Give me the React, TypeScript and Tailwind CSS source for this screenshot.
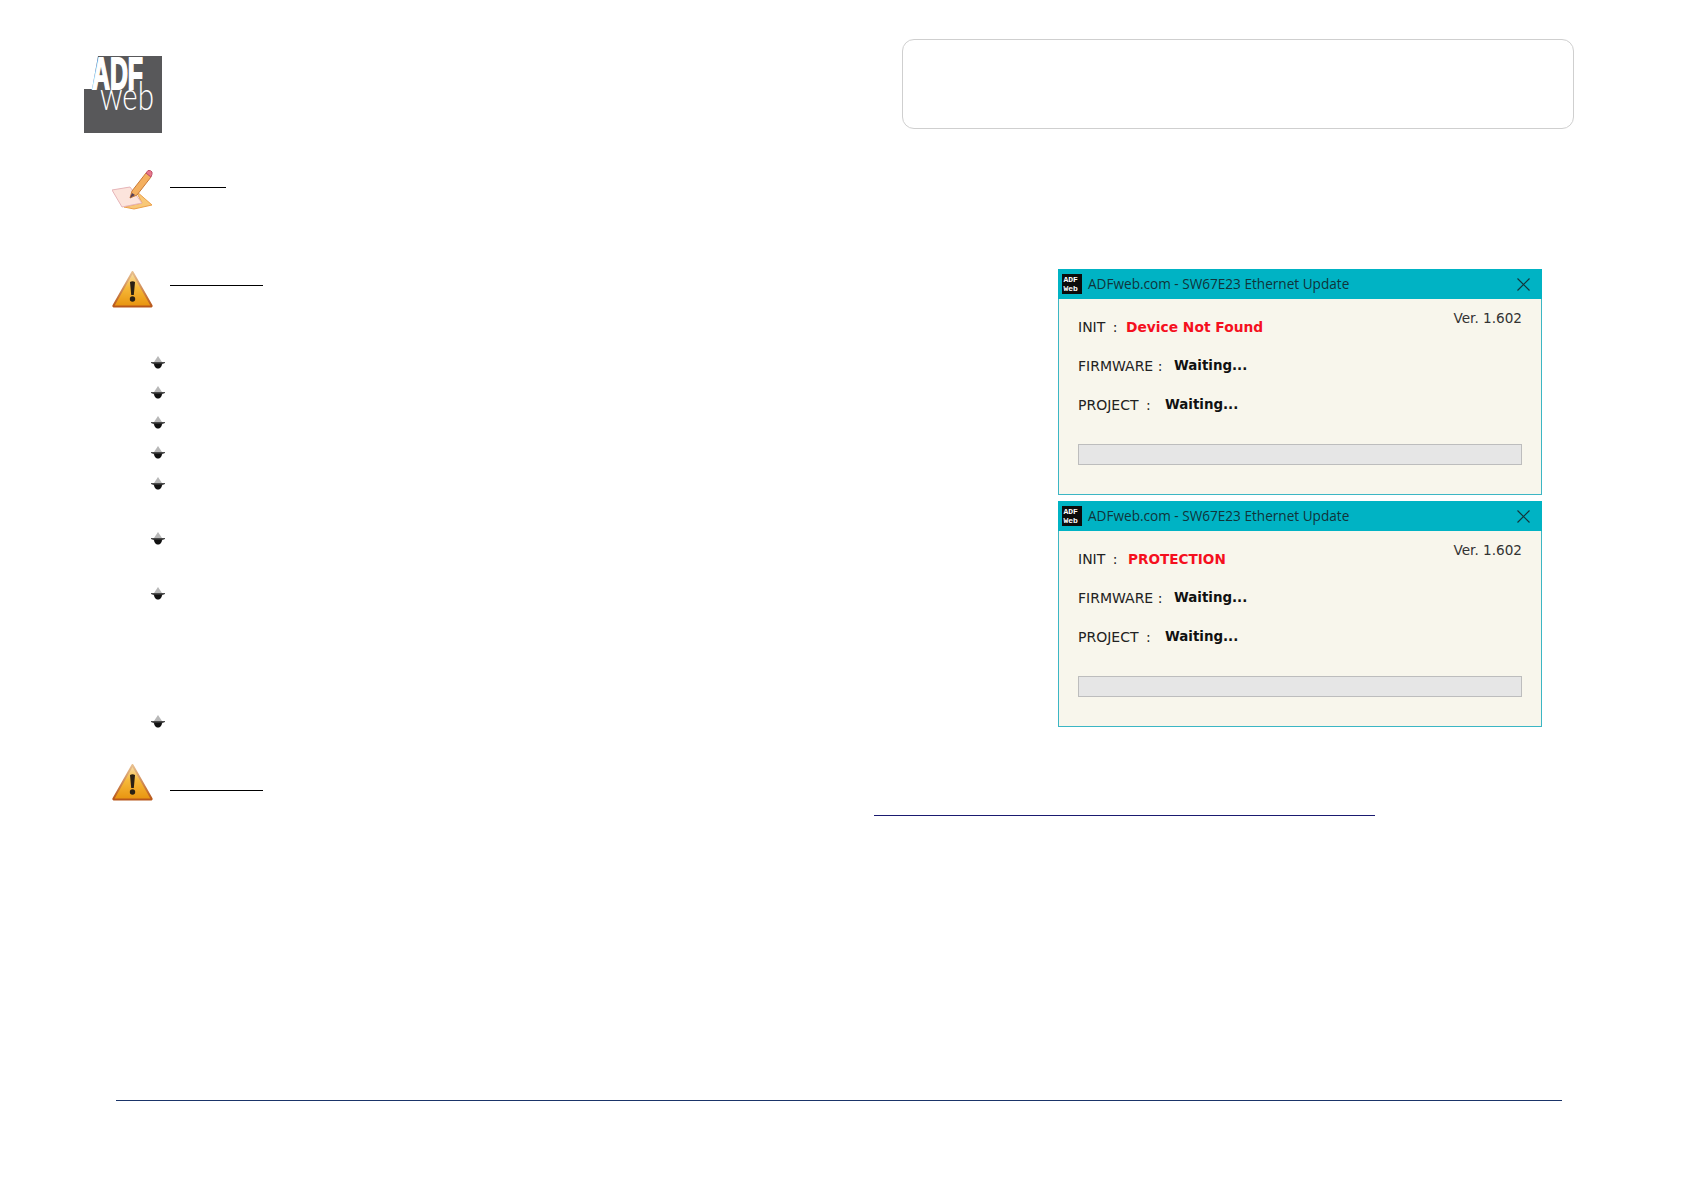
const bullets = [
  "h-[30px]",
  "h-[30px]",
  "h-[30px]",
  "h-[31px]",
  "h-[55px]",
  "h-[55px]",
  "h-[128px]",
  "h-[50px]",
];

function Logo() {
  return (
    <svg width="78" height="77" viewBox="0 0 78 77" className="mt-[17px] shrink-0 overflow-visible">
      <rect width="78" height="77" fill="#58585a" />
      <path d="M0 0 H14 L8 33 H0 Z" fill="#fff" />
      <text
        x="8"
        y="33"
        fill="#fff"
        stroke="#fff"
        strokeWidth="2"
        fontFamily="'Liberation Sans', sans-serif"
        fontWeight="700"
        fontSize="44"
        textLength="51"
        lengthAdjust="spacingAndGlyphs"
      >
        ADF
      </text>
      <text
        x="16"
        y="54"
        fill="#fff"
        fontFamily="'Lato', sans-serif"
        fontWeight="300"
        fontSize="40"
        textLength="54"
        lengthAdjust="spacingAndGlyphs"
      >
        web
      </text>
    </svg>
  );
}

function NoteIcon() {
  return (
    <svg width="41" height="40" viewBox="0 0 41 40" className="shrink-0 blur-[0.4px]">
      <path d="M24 21 L40 35 L22 39 L12 37 L30 33 Z" fill="#f8c878" stroke="#ec9f48" strokeWidth="1" />
      <path d="M0 20 L18 17 L30 33 L10 37 Z" fill="#fce4dc" stroke="#e6b4b8" strokeWidth="1" />
      <path d="M18 28 L20 21 L34 3 L39 7 L25 25 Z" fill="#f4b060" stroke="#c87a3a" strokeWidth="1" />
      <path d="M18 28 L20 23 L23 25 Z" fill="#55405a" />
      <path d="M34 3 L36 0.5 Q39 0 40 2 Q40.5 4 39 7 Z" fill="#e8788c" stroke="#c0506a" strokeWidth="1" />
    </svg>
  );
}

function WarningIcon({ id }: { id: string }) {
  return (
    <svg width="41" height="38" viewBox="0 0 41 38" className="shrink-0 blur-[0.4px]">
      <defs>
        <linearGradient id={id} x1="0" y1="0" x2="0" y2="1">
          <stop offset="0" stopColor="#f8e0b0" />
          <stop offset="0.45" stopColor="#f6b93a" />
          <stop offset="1" stopColor="#e8930e" />
        </linearGradient>
        <linearGradient id={`${id}-edge`} x1="0" y1="0" x2="0" y2="1">
          <stop offset="0" stopColor="#e8c090" />
          <stop offset="1" stopColor="#b8571a" />
        </linearGradient>
      </defs>
      <path
        d="M20.5 2 L39.5 35.5 Q40 36.5 38.5 36.5 L2.5 36.5 Q1 36.5 1.5 35.5 Z"
        fill={`url(#${id})`}
        stroke={`url(#${id}-edge)`}
        strokeWidth="2"
        strokeLinejoin="round"
      />
      <path d="M18 12 Q20.5 10.5 23 12 L21.8 25 L19.2 25 Z" fill="#2a2014" />
      <circle cx="20.5" cy="29" r="2.7" fill="#2a2014" />
    </svg>
  );
}

function Bullet() {
  return (
    <svg width="14" height="13" viewBox="0 0 14 13" className="ml-[39px] block">
      <path d="M7 0 L11 6 L3 6 Z" fill="#b8b8b8" />
      <path d="M0 6 H14 V7 L10.5 8.5 H3.5 L0 7 Z" fill="#4a4a4a" />
      <path d="M3 7.5 H11 Q11 11 8 12.5 H6 Q3 11 3 7.5 Z" fill="#111" />
    </svg>
  );
}

function StatusRow({
  label,
  labelClass,
  value,
  valueClass,
}: {
  label: string;
  labelClass: string;
  value: string;
  valueClass: string;
}) {
  return (
    <div className="flex h-[16px] items-center leading-[16px]">
      <span className={`shrink-0 whitespace-nowrap ${labelClass}`}>{label}</span>
      <span className={`font-bold ${valueClass}`}>{value}</span>
    </div>
  );
}

function UpdateWindow({
  status,
  statusClass,
  initClass,
}: {
  status: string;
  statusClass: string;
  initClass: string;
}) {
  return (
    <div className="flex h-[226px] w-[484px] flex-col border border-[#3cb6c4] bg-[#f8f6ec] font-['DejaVu_Sans',sans-serif] text-[14px] text-[#222]">
      <div className="-mx-px -mt-px flex h-[30px] shrink-0 items-center bg-[#00b3c4] pl-[4px] pr-[12px]">
        <svg width="20" height="20" viewBox="0 0 20 20" className="shrink-0">
          <rect width="20" height="20" fill="#0b0b0b" />
          <text x="1.5" y="8" fill="#fff" fontSize="8" fontWeight="700" fontFamily="'Liberation Mono', monospace">
            ADF
          </text>
          <text x="1.5" y="17" fill="#fff" fontSize="8" fontWeight="700" fontFamily="'Liberation Mono', monospace">
            Web
          </text>
        </svg>
        <span className="ml-[6px] font-['Open_Sans',sans-serif] text-[13.6px] text-[#10343a]">
          ADFweb.com - SW67E23 Ethernet Update
        </span>
        <svg width="13" height="13" viewBox="0 0 13 13" className="ml-auto">
          <path d="M0.5 0.5 L12.5 12.5 M12.5 0.5 L0.5 12.5" stroke="#12353b" strokeWidth="1.2" fill="none" />
        </svg>
      </div>
      <div className="flex flex-col px-[19px]">
        <div className="flex items-start justify-between pt-[11px]">
          <div className="mt-[9px]">
            <StatusRow label="INIT :" labelClass={initClass} value={status} valueClass={statusClass} />
          </div>
          <span className="text-[13.6px] leading-[16px] text-[#333]">Ver. 1.602</span>
        </div>
        <div className="mt-[23px]">
          <StatusRow label="FIRMWARE :" labelClass="w-[96px]" value="Waiting..." valueClass="text-[13.4px] text-[#111]" />
        </div>
        <div className="mt-[23px]">
          <StatusRow label="PROJECT :" labelClass="w-[87px] [word-spacing:3px]" value="Waiting..." valueClass="text-[13.4px] text-[#111]" />
        </div>
        <div className="mt-[31px] h-[21px] border border-[#bdbdbd] bg-[#e6e6e6]" />
      </div>
    </div>
  );
}

export default function App() {
  return (
    <div className="flex h-[1190px] w-full flex-col bg-white">
      <header className="flex items-start justify-between pl-[84px] pr-[110px] pt-[39px]">
        <Logo />
        <div className="h-[90px] w-[672px] rounded-[12px] border border-[#cfcfcf]" />
      </header>

      <main className="mt-[37px] flex items-start pl-[112px]">
        <div className="w-[946px]">
          <section className="flex h-[100px] items-start gap-[17px]">
            <NoteIcon />
            <div className="mt-[17px] w-[56px] border-b border-black" />
          </section>
          <section className="flex h-[86px] items-start gap-[17px]">
            <WarningIcon id="warn-a" />
            <div className="mt-[15px] w-[93px] border-b border-black" />
          </section>
          <ul>
            {bullets.map((height, i) => (
              <li key={i} className={height}>
                <Bullet />
              </li>
            ))}
          </ul>
        </div>
        <div className="mt-[99px] flex flex-col gap-[6px]">
          <UpdateWindow
            status="Device Not Found"
            statusClass="text-[13.8px] text-[#f5101e]"
            initClass="w-[48px] [word-spacing:3px]"
          />
          <UpdateWindow
            status="PROTECTION"
            statusClass="text-[13.6px] text-[#f5101e]"
            initClass="w-[50px] [word-spacing:3px]"
          />
        </div>
      </main>

      <section className="-mt-[2px] flex items-start gap-[17px] pl-[112px]">
        <WarningIcon id="warn-b" />
        <div className="flex flex-col">
          <div className="mt-[27px] w-[93px] border-b border-black" />
          <div className="ml-[704px] mt-[24px] w-[501px] border-b border-[#1a1a70]" />
        </div>
      </section>

      <footer className="mb-[89px] ml-[116px] mr-[122px] mt-auto border-b border-[#1a3468]" />
    </div>
  );
}
